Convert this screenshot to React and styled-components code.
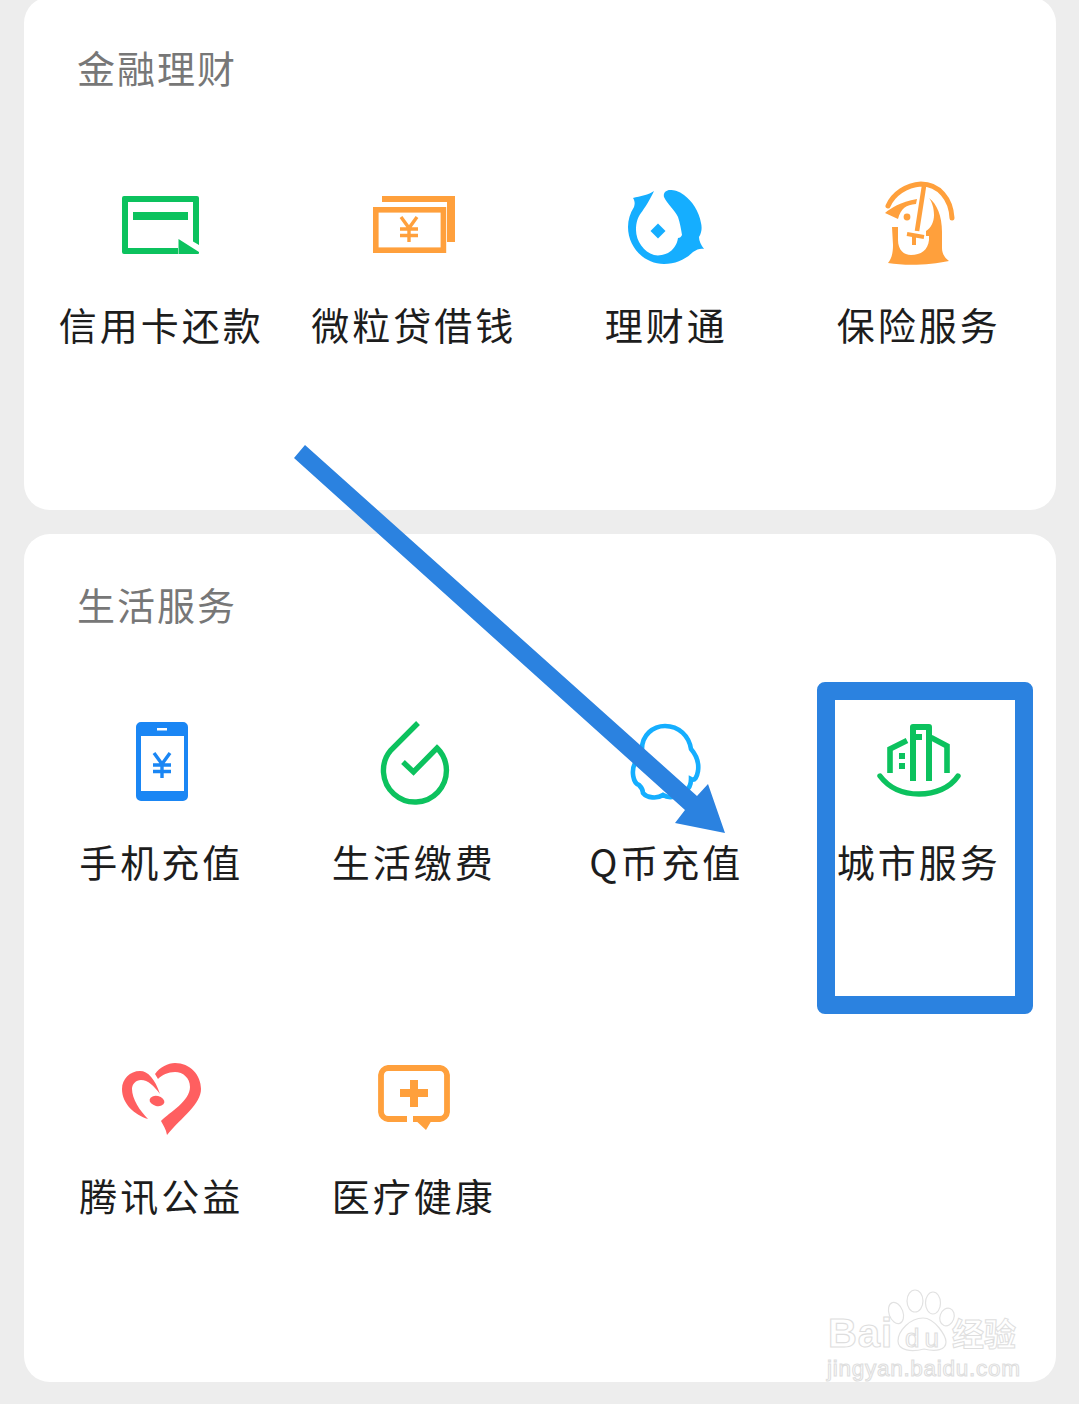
import React from 'react'
import styled, { createGlobalStyle } from 'styled-components'

const GlobalStyle = createGlobalStyle`
    html, body {
        margin: 0;
        padding: 0;
        background: #ededed;
    }
`

const ORANGE = '#ffa03c'
const GREEN = '#0cc25e'
const SKY = '#15aeff'

// the icons are drawn in page coordinates, each svg only looks at its own 90x90 window
function Yen({ x, y, color, s = 1 }) {
    return (
        <g transform={`translate(${x} ${y}) scale(${s})`} fill="none" stroke={color} strokeWidth="3.4">
            <path d="M-8 -12 L0 -1 L8 -12 M-9 0 H9 M-9 6.5 H9 M0 -1 V13" />
        </g>
    )
}

const CardIcon = () => (
    <>
        <path
            fillRule="evenodd"
            fill={GREEN}
            d="M124 196H197a2 2 0 0 1 2 2V245L193 241.5V202H128V248H178V254H124a2 2 0 0 1 -2 -2V198a2 2 0 0 1 2 -2Z"
        />
        <path fill={GREEN} d="M133 212H188V220H133Z M178.5 239L199 252V253a1 1 0 0 1 -1 1H178.5Z" />
    </>
)

const MoneyIcon = () => (
    <>
        <path fill={ORANGE} d="M382 196H455V242H447V202H382Z" />
        <rect x="375.8" y="209.8" width="67.6" height="40.4" fill="#fff" stroke={ORANGE} strokeWidth="5.6" />
        <Yen x={409} y={229} color={ORANGE} />
    </>
)

const FishIcon = () => (
    <>
        <path
            fill={SKY}
            d="M655 191C650 195 641 196 634 198C636 201 636 204 635 207C631 213 629 220 629 227C629 247 645 264 665 264C677 264 687 259 694 252C698 249 702 248 705 249C702 245 700 241 700 237C703 232 703 227 702 223C700 211 693 201 685 195C680 191 675 190 671 190C667 190 664 193 665 197C668 204 676 210 679 217C681 223 682 229 683 235C682 237 681 238 679 238C678 245 674 250 669 253C664 255 660 256 655 255C645 252 637 241 637 230C637 222 639 217 642 213C645 209 652 198 655 191Z"
        />
        <path fill={SKY} d="M659 223.5L666.5 231L659 238.5L651.5 231Z" />
    </>
)

const PenguinIcon = () => (
    <>
        <path d="M887 206C892 194 905 185 920 184C938 184 950 199 951 218" fill="none" stroke={ORANGE} strokeWidth="5" strokeLinecap="round" />
        <path d="M923 186L916 231" fill="none" stroke={ORANGE} strokeWidth="4.6" />
        <path fill={ORANGE} d="M884 213C890 208 899 202 916 199L915 204C905 205 900 208 897 219Z" />
        <circle cx="906" cy="217" r="3.4" fill={ORANGE} />
        <path
            fill={ORANGE}
            d="M928 198C936 204 941 216 941 232V248C941 254 944 258 948 261C930 265 905 266 887 263C891 258 892 252 892 245L891 227H897L897 240C897 250 903 255 910 255C920 255 927 250 928 240V236H925V231C930 228 933 222 933 215C933 208 931 202 928 198Z"
        />
        <path d="M906 234L923 237 M913 236V245" fill="none" stroke={ORANGE} strokeWidth="4" />
    </>
)

const PhoneIcon = () => (
    <>
        <path
            fillRule="evenodd"
            fill="#1a86f4"
            d="M141 723H183a5 5 0 0 1 5 5V797a5 5 0 0 1 -5 5H141a5 5 0 0 1 -5 -5V728a5 5 0 0 1 5 -5ZM141 737V792H184V737ZM157 729V731.5H167V729Z"
        />
        <Yen x={162} y={766} color="#1a86f4" />
    </>
)

const DropIcon = () => (
    <path
        d="M418 724L391 751A31.5 31.5 0 1 0 437 749L413.5 773L403 763"
        fill="none"
        stroke={GREEN}
        strokeWidth="5.4"
    />
)

const QQIcon = () => (
    <path
        d="M643 750C643 736 654 727 666 727C680 727 690 737 692 750C698 757 700 765 699 772C698 778 696 782 692 780C692 786 690 790 686 792C680 798 670 800 664 796C658 800 648 799 644 794C644 790 642 788 640 786C634 784 632 772 636 764C638 758 641 754 643 750Z"
        fill="none"
        stroke={SKY}
        strokeWidth="4.6"
    />
)

const CityIcon = () => (
    <>
        <path d="M879 777C888 789 902 795 918 795C934 795 949 789 957 777" fill="none" stroke={GREEN} strokeWidth="5.4" strokeLinecap="round" />
        <path d="M912 782V728H928V782" fill="none" stroke={GREEN} strokeWidth="6" strokeLinejoin="round" />
        <path d="M889 774V750L906 741.5 M930 738.5L946 747V774" fill="none" stroke={GREEN} strokeWidth="5.6" />
        <path fill={GREEN} d="M898 754H904V760H898Z M898 764H904V770H898Z M915 735H921V741H915Z" />
    </>
)

const HeartIcon = () => (
    <>
        <path
            fill="#ff5f60"
            d="M155 1075C160 1068 168 1064 175 1064C190 1064 201 1076 201 1090C201 1105 182 1118 167 1136C166 1130 163 1126 161 1122C170 1113 190 1102 190 1088C190 1079 183 1073 175 1073C168 1073 162 1076 158 1080Z"
        />
        <path
            fill="#ff5f60"
            d="M160 1095C155 1080 148 1072 140 1072C130 1072 122 1080 122 1090C122 1105 135 1116 148 1120C140 1112 132 1100 132 1090C132 1085 136 1081 141 1081C148 1081 154 1087 160 1095Z"
        />
        <ellipse cx="157" cy="1102" rx="7.5" ry="5" fill="#ff5f60" transform="rotate(12 157 1102)" />
    </>
)

const MedicalIcon = () => (
    <>
        <path
            d="M407 1120H388A7.5 7.5 0 0 1 381 1113V1076A7.5 7.5 0 0 1 388 1069H440A7.5 7.5 0 0 1 447 1076V1113A7.5 7.5 0 0 1 440 1120H413"
            fill="none"
            stroke={ORANGE}
            strokeWidth="5.8"
        />
        <path fill={ORANGE} d="M413 1119L433 1119L426 1131Z M410 1081H418V1090H428V1098H418V1108H410V1098H400V1090H410Z" />
    </>
)

const sections = [
    {
        title: '金融理财',
        height: 513,
        top: -3,
        items: [
            { label: '信用卡还款', Icon: CardIcon, x: 116, y: 180 },
            { label: '微粒贷借钱', Icon: MoneyIcon, x: 369, y: 180 },
            { label: '理财通', Icon: FishIcon, x: 622, y: 180 },
            { label: '保险服务', Icon: PenguinIcon, x: 873, y: 180 },
        ],
    },
    {
        title: '生活服务',
        height: 848,
        items: [
            { label: '手机充值', Icon: PhoneIcon, x: 116, y: 718 },
            { label: '生活缴费', Icon: DropIcon, x: 369, y: 718 },
            { label: 'Q币充值', Icon: QQIcon, x: 622, y: 718 },
            { label: '城市服务', Icon: CityIcon, x: 873, y: 718 },
            { label: '腾讯公益', Icon: HeartIcon, x: 116, y: 1052 },
            { label: '医疗健康', Icon: MedicalIcon, x: 369, y: 1052 },
        ],
    },
]

function App() {
    return (
        <Page>
            <GlobalStyle />
            {sections.map((section) => (
                <Card key={section.title} $height={section.height} $top={section.top}>
                    <Title>{section.title}</Title>
                    <Grid>
                        {section.items.map(({ label, Icon, x, y }) => (
                            <Cell key={label}>
                                <IconBox viewBox={`${x} ${y} 90 90`}>
                                    <Icon />
                                </IconBox>
                                <Label>{label}</Label>
                            </Cell>
                        ))}
                    </Grid>
                </Card>
            ))}
            <Highlight />
            <Arrow viewBox="0 0 1079 1404">
                <path fill="#2b82e0" d="M305 445L697 796L708 784L725 833L675 823L685 810L294 458Z" />
            </Arrow>
            <Watermark viewBox="0 0 1079 1404">
                <g fill="#fff" stroke="#e2e2e2" strokeWidth="1.2">
                    <ellipse cx="896" cy="1313" rx="7" ry="11" transform="rotate(-20 896 1313)" />
                    <ellipse cx="915" cy="1301" rx="8" ry="11" />
                    <ellipse cx="933" cy="1303" rx="7.5" ry="11" />
                    <ellipse cx="947" cy="1317" rx="7" ry="9" transform="rotate(20 947 1317)" />
                    <path d="M923 1318C935 1318 946 1336 946 1342C946 1350 936 1352 924 1349C912 1352 898 1351 898 1341C898 1331 910 1318 923 1318Z" />
                </g>
                <g fontFamily="'Liberation Sans', sans-serif" fill="#fff" stroke="#dedede" strokeWidth="1.1">
                    <text x="828" y="1347" fontSize="40" fontWeight="700" textLength="64">Bai</text>
                    <text x="905" y="1347" fontSize="26" textLength="34">du</text>
                    <text x="827" y="1376" fontSize="22.5" textLength="193">jingyan.baidu.com</text>
                </g>
                <text
                    x="952"
                    y="1346"
                    fontFamily="'Noto Sans CJK SC', sans-serif"
                    fontSize="32"
                    fontWeight="700"
                    fill="#fff"
                    stroke="#dedede"
                    strokeWidth="1"
                >
                    经验
                </text>
            </Watermark>
        </Page>
    )
}

const Page = styled.div`
    position: relative;
    width: 1079px;
    height: 1404px;
    overflow: hidden;
    background: #ededed;
    padding: 0 23px 0 24px;
    box-sizing: border-box;
    display: flex;
    flex-direction: column;
    gap: 24px;
`

const Card = styled.section`
    background: #fff;
    border-radius: 26px;
    box-sizing: border-box;
    flex: none;
    height: ${(p) => p.$height}px;
    margin-top: ${(p) => p.$top || 0}px;
    padding-top: 48px;
`

const Title = styled.h2`
    margin: 0 0 0 53px;
    font: 400 38px/44px 'Noto Sans CJK SC', sans-serif;
    letter-spacing: 2px;
    color: #777;
`

const Grid = styled.div`
    display: grid;
    grid-template-columns: repeat(4, 252.5px);
    grid-auto-rows: 334px;
    margin: 91px 0 0 11px;
`

const Cell = styled.div`
    display: flex;
    flex-direction: column;
    align-items: center;
`

const IconBox = styled.svg`
    display: block;
    width: 90px;
    height: 90px;
    flex: none;
`

const Label = styled.span`
    margin-top: 32px;
    font: 400 38px/44px 'Noto Sans CJK SC', sans-serif;
    letter-spacing: 3px;
    color: #1d1d1d;
    white-space: nowrap;
`

const Highlight = styled.div`
    position: absolute;
    left: 817px;
    top: 682px;
    width: 216px;
    height: 332px;
    box-sizing: border-box;
    border: 18px solid #2b82e0;
    border-radius: 8px;
`

const Arrow = styled.svg`
    position: absolute;
    left: 0;
    top: 0;
    width: 1079px;
    height: 1404px;
    pointer-events: none;
`

const Watermark = styled(Arrow)``

export default App
